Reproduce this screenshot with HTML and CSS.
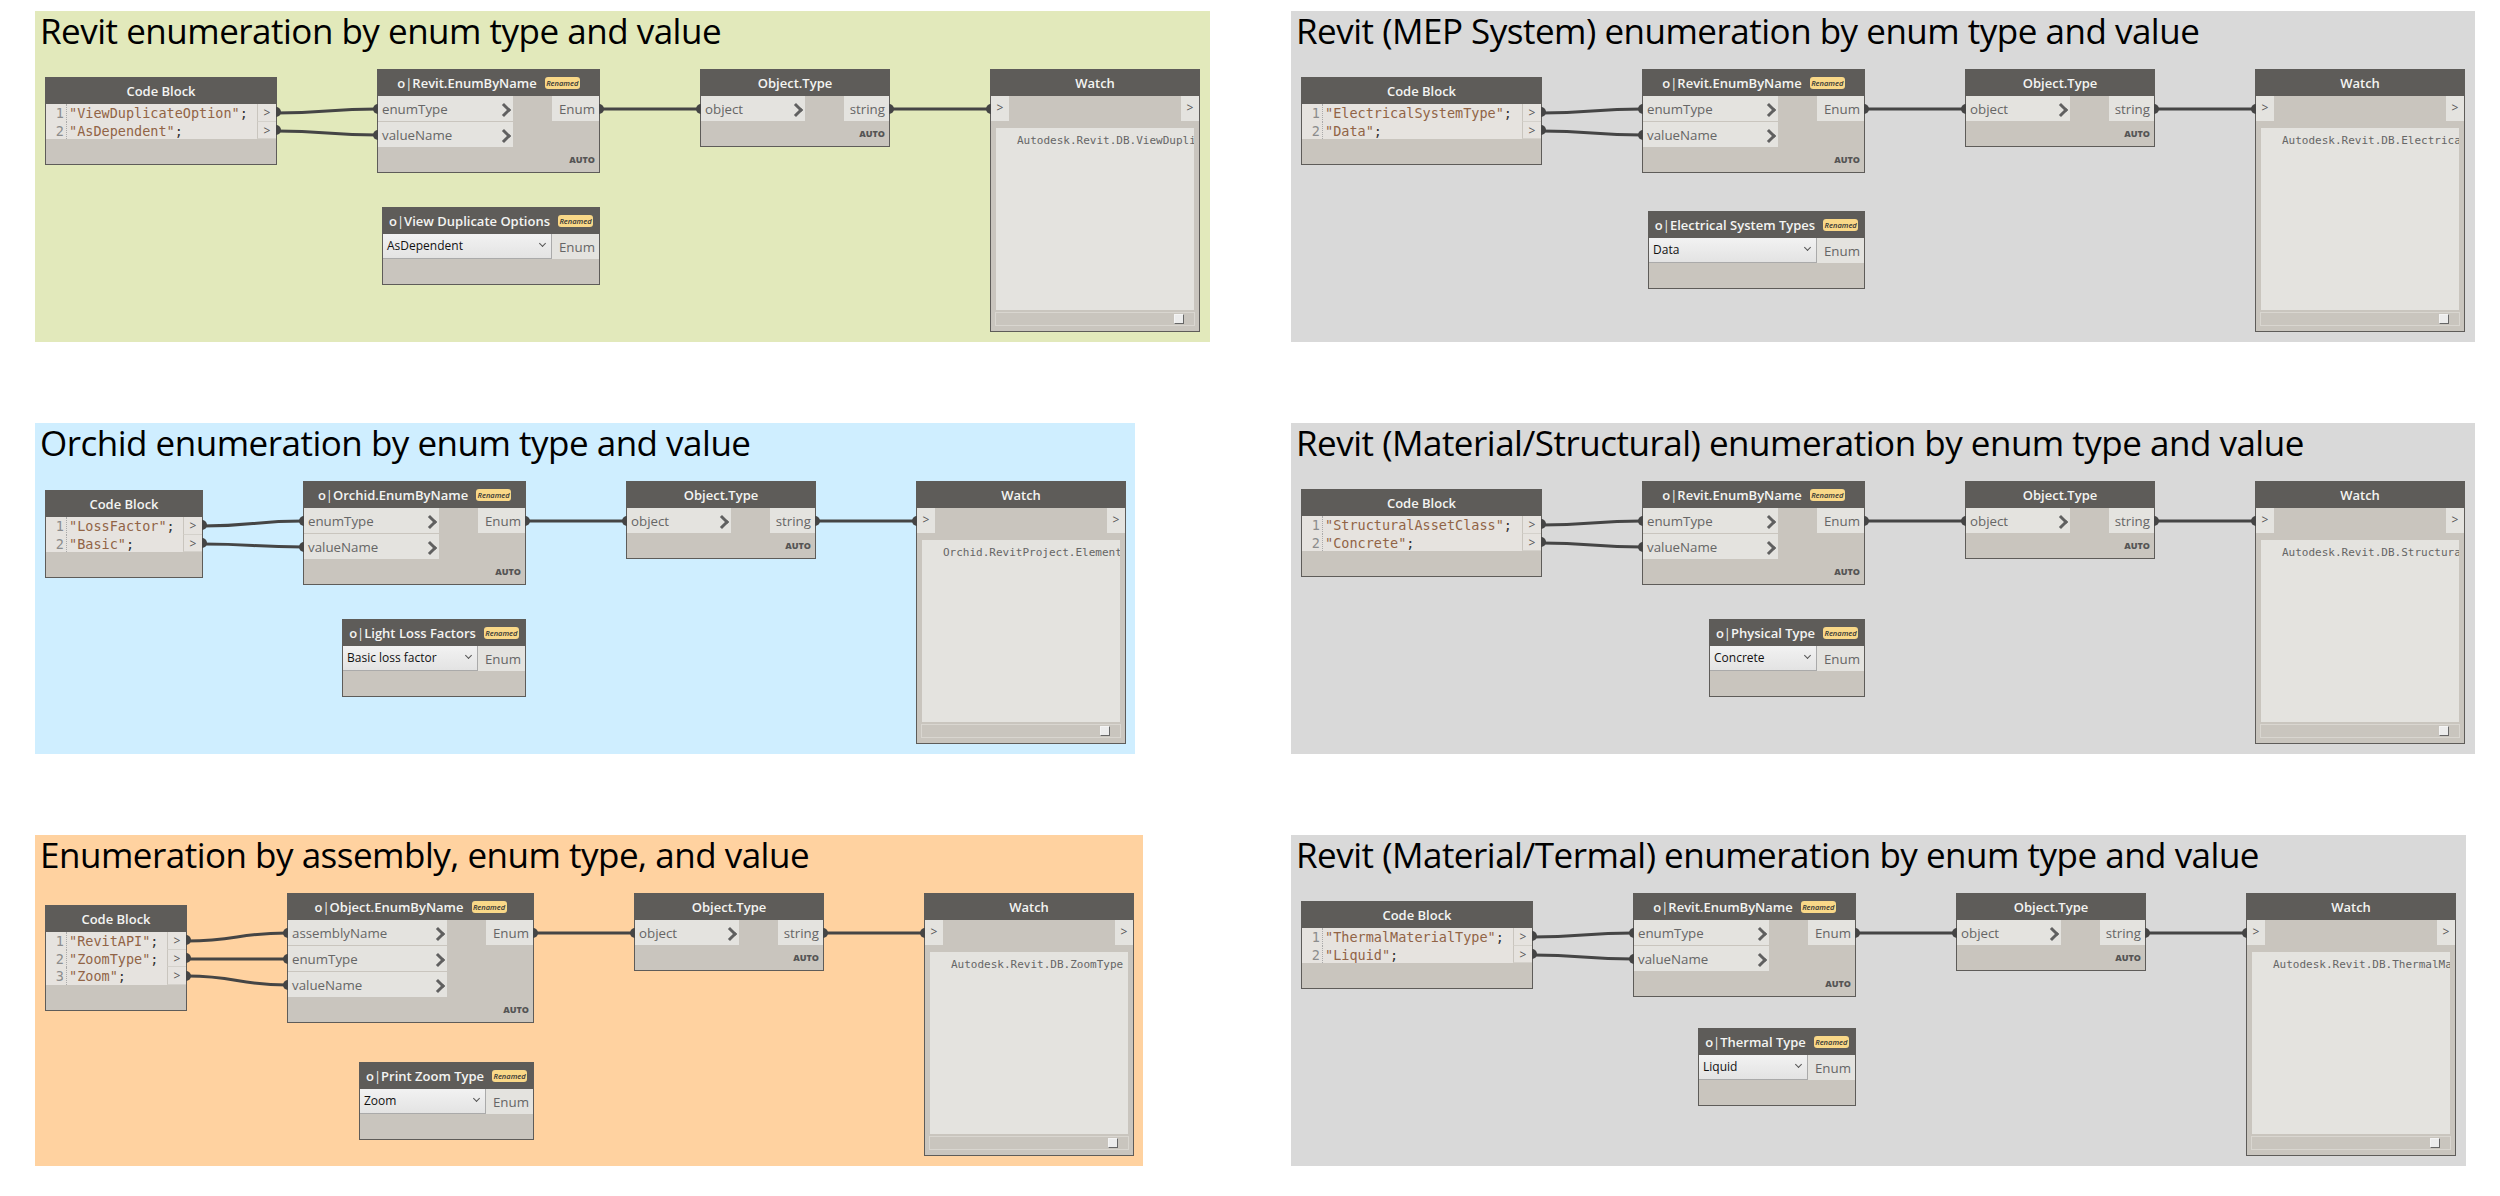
FILE: index.html
```html
<!DOCTYPE html>
<html lang="en">
<head>
  <meta charset="UTF-8">
  <title>Enumeration nodes</title>
  <link rel="stylesheet" href="styles.css">
</head>
<body>
  <div class="sheet">

    <!-- Revit -->
    <section class="panel panel-a">
      <h2>Revit enumeration by enum type and value</h2>
      <svg class="wires">
        <path d="M242 102 C292 102 292 98 342 98"/>
        <path d="M242 120 C292 120 292 124 342 124"/>
        <path d="M565 98 H665"/>
        <path d="M855 98 H955"/>
      </svg>
      <div class="node code">
        <div class="node-head">Code Block</div>
        <div class="code-line"><span class="ln-num">1</span><span class="ln-text"><b>"ViewDuplicateOption"</b>;</span><span class="ln-port out">&gt;</span></div>
        <div class="code-line"><span class="ln-num">2</span><span class="ln-text"><b>"AsDependent"</b>;</span><span class="ln-port out">&gt;</span></div>
        <div class="node-foot"></div>
      </div>
      <div class="node enum">
        <div class="node-head"><span>o<i class="pipe">|</i>Revit.EnumByName</span><span class="badge">Renamed</span></div>
        <div class="ports">
          <div class="inputs">
            <div class="in-row in">enumType</div>
            <div class="in-row in">valueName</div>
          </div>
          <div class="out-row out">Enum</div>
        </div>
        <div class="node-foot">AUTO</div>
      </div>
      <div class="node pick">
        <div class="node-head"><span>o<i class="pipe">|</i>View Duplicate Options</span><span class="badge">Renamed</span></div>
        <div class="ports">
          <div class="select">AsDependent</div>
          <div class="out-row">Enum</div>
        </div>
        <div class="node-foot"></div>
      </div>
      <div class="node type">
        <div class="node-head">Object.Type</div>
        <div class="ports">
          <div class="inputs"><div class="in-row in">object</div></div>
          <div class="out-row out">string</div>
        </div>
        <div class="node-foot">AUTO</div>
      </div>
      <div class="node watch">
        <div class="node-head">Watch</div>
        <div class="ports">
          <div class="watch-port in">&gt;</div>
          <div class="watch-port">&gt;</div>
        </div>
        <div class="watch-box">Autodesk.Revit.DB.ViewDuplicateOption</div>
        <div class="watch-bar"><span class="thumb"></span></div>
      </div>
    </section>

    <!-- Revit MEP -->
    <section class="panel panel-b">
      <h2>Revit (MEP System) enumeration by enum type and value</h2>
      <svg class="wires">
        <path d="M251 102 C301 102 301 98 351 98"/>
        <path d="M251 120 C301 120 301 124 351 124"/>
        <path d="M574 98 H674"/>
        <path d="M864 98 H964"/>
      </svg>
      <div class="node code">
        <div class="node-head">Code Block</div>
        <div class="code-line"><span class="ln-num">1</span><span class="ln-text"><b>"ElectricalSystemType"</b>;</span><span class="ln-port out">&gt;</span></div>
        <div class="code-line"><span class="ln-num">2</span><span class="ln-text"><b>"Data"</b>;</span><span class="ln-port out">&gt;</span></div>
        <div class="node-foot"></div>
      </div>
      <div class="node enum">
        <div class="node-head"><span>o<i class="pipe">|</i>Revit.EnumByName</span><span class="badge">Renamed</span></div>
        <div class="ports">
          <div class="inputs">
            <div class="in-row in">enumType</div>
            <div class="in-row in">valueName</div>
          </div>
          <div class="out-row out">Enum</div>
        </div>
        <div class="node-foot">AUTO</div>
      </div>
      <div class="node pick">
        <div class="node-head"><span>o<i class="pipe">|</i>Electrical System Types</span><span class="badge">Renamed</span></div>
        <div class="ports">
          <div class="select">Data</div>
          <div class="out-row">Enum</div>
        </div>
        <div class="node-foot"></div>
      </div>
      <div class="node type">
        <div class="node-head">Object.Type</div>
        <div class="ports">
          <div class="inputs"><div class="in-row in">object</div></div>
          <div class="out-row out">string</div>
        </div>
        <div class="node-foot">AUTO</div>
      </div>
      <div class="node watch">
        <div class="node-head">Watch</div>
        <div class="ports">
          <div class="watch-port in">&gt;</div>
          <div class="watch-port">&gt;</div>
        </div>
        <div class="watch-box">Autodesk.Revit.DB.ElectricalSystemType</div>
        <div class="watch-bar"><span class="thumb"></span></div>
      </div>
    </section>

    <!-- Orchid -->
    <section class="panel panel-c">
      <h2>Orchid enumeration by enum type and value</h2>
      <svg class="wires">
        <path d="M168 103 C218 103 218 98 268 98"/>
        <path d="M168 121 C218 121 218 124 268 124"/>
        <path d="M491 98 H591"/>
        <path d="M781 98 H881"/>
      </svg>
      <div class="node code">
        <div class="node-head">Code Block</div>
        <div class="code-line"><span class="ln-num">1</span><span class="ln-text"><b>"LossFactor"</b>;</span><span class="ln-port out">&gt;</span></div>
        <div class="code-line"><span class="ln-num">2</span><span class="ln-text"><b>"Basic"</b>;</span><span class="ln-port out">&gt;</span></div>
        <div class="node-foot"></div>
      </div>
      <div class="node enum">
        <div class="node-head"><span>o<i class="pipe">|</i>Orchid.EnumByName</span><span class="badge">Renamed</span></div>
        <div class="ports">
          <div class="inputs">
            <div class="in-row in">enumType</div>
            <div class="in-row in">valueName</div>
          </div>
          <div class="out-row out">Enum</div>
        </div>
        <div class="node-foot">AUTO</div>
      </div>
      <div class="node pick">
        <div class="node-head"><span>o<i class="pipe">|</i>Light Loss Factors</span><span class="badge">Renamed</span></div>
        <div class="ports">
          <div class="select">Basic loss factor</div>
          <div class="out-row">Enum</div>
        </div>
        <div class="node-foot"></div>
      </div>
      <div class="node type">
        <div class="node-head">Object.Type</div>
        <div class="ports">
          <div class="inputs"><div class="in-row in">object</div></div>
          <div class="out-row out">string</div>
        </div>
        <div class="node-foot">AUTO</div>
      </div>
      <div class="node watch">
        <div class="node-head">Watch</div>
        <div class="ports">
          <div class="watch-port in">&gt;</div>
          <div class="watch-port">&gt;</div>
        </div>
        <div class="watch-box">Orchid.RevitProject.Elements.LightLossFactor</div>
        <div class="watch-bar"><span class="thumb"></span></div>
      </div>
    </section>

    <!-- Revit structural -->
    <section class="panel panel-d">
      <h2>Revit (Material/Structural) enumeration by enum type and value</h2>
      <svg class="wires">
        <path d="M251 102 C301 102 301 98 351 98"/>
        <path d="M251 120 C301 120 301 124 351 124"/>
        <path d="M574 98 H674"/>
        <path d="M864 98 H964"/>
      </svg>
      <div class="node code">
        <div class="node-head">Code Block</div>
        <div class="code-line"><span class="ln-num">1</span><span class="ln-text"><b>"StructuralAssetClass"</b>;</span><span class="ln-port out">&gt;</span></div>
        <div class="code-line"><span class="ln-num">2</span><span class="ln-text"><b>"Concrete"</b>;</span><span class="ln-port out">&gt;</span></div>
        <div class="node-foot"></div>
      </div>
      <div class="node enum">
        <div class="node-head"><span>o<i class="pipe">|</i>Revit.EnumByName</span><span class="badge">Renamed</span></div>
        <div class="ports">
          <div class="inputs">
            <div class="in-row in">enumType</div>
            <div class="in-row in">valueName</div>
          </div>
          <div class="out-row out">Enum</div>
        </div>
        <div class="node-foot">AUTO</div>
      </div>
      <div class="node pick">
        <div class="node-head"><span>o<i class="pipe">|</i>Physical Type</span><span class="badge">Renamed</span></div>
        <div class="ports">
          <div class="select">Concrete</div>
          <div class="out-row">Enum</div>
        </div>
        <div class="node-foot"></div>
      </div>
      <div class="node type">
        <div class="node-head">Object.Type</div>
        <div class="ports">
          <div class="inputs"><div class="in-row in">object</div></div>
          <div class="out-row out">string</div>
        </div>
        <div class="node-foot">AUTO</div>
      </div>
      <div class="node watch">
        <div class="node-head">Watch</div>
        <div class="ports">
          <div class="watch-port in">&gt;</div>
          <div class="watch-port">&gt;</div>
        </div>
        <div class="watch-box">Autodesk.Revit.DB.StructuralAssetClass</div>
        <div class="watch-bar"><span class="thumb"></span></div>
      </div>
    </section>

    <!-- assembly -->
    <section class="panel panel-e">
      <h2>Enumeration by assembly, enum type, and value</h2>
      <svg class="wires">
        <path d="M152 106 C202 106 202 98 252 98"/>
        <path d="M152 124 H252"/>
        <path d="M152 141 C202 141 202 150 252 150"/>
        <path d="M499 98 H599"/>
        <path d="M789 98 H889"/>
      </svg>
      <div class="node code">
        <div class="node-head">Code Block</div>
        <div class="code-line"><span class="ln-num">1</span><span class="ln-text"><b>"RevitAPI"</b>;</span><span class="ln-port out">&gt;</span></div>
        <div class="code-line"><span class="ln-num">2</span><span class="ln-text"><b>"ZoomType"</b>;</span><span class="ln-port out">&gt;</span></div>
        <div class="code-line"><span class="ln-num">3</span><span class="ln-text"><b>"Zoom"</b>;</span><span class="ln-port out">&gt;</span></div>
        <div class="node-foot"></div>
      </div>
      <div class="node enum">
        <div class="node-head"><span>o<i class="pipe">|</i>Object.EnumByName</span><span class="badge">Renamed</span></div>
        <div class="ports">
          <div class="inputs">
            <div class="in-row in">assemblyName</div>
            <div class="in-row in">enumType</div>
            <div class="in-row in">valueName</div>
          </div>
          <div class="out-row out">Enum</div>
        </div>
        <div class="node-foot">AUTO</div>
      </div>
      <div class="node pick">
        <div class="node-head"><span>o<i class="pipe">|</i>Print Zoom Type</span><span class="badge">Renamed</span></div>
        <div class="ports">
          <div class="select">Zoom</div>
          <div class="out-row">Enum</div>
        </div>
        <div class="node-foot"></div>
      </div>
      <div class="node type">
        <div class="node-head">Object.Type</div>
        <div class="ports">
          <div class="inputs"><div class="in-row in">object</div></div>
          <div class="out-row out">string</div>
        </div>
        <div class="node-foot">AUTO</div>
      </div>
      <div class="node watch">
        <div class="node-head">Watch</div>
        <div class="ports">
          <div class="watch-port in">&gt;</div>
          <div class="watch-port">&gt;</div>
        </div>
        <div class="watch-box">Autodesk.Revit.DB.ZoomType</div>
        <div class="watch-bar"><span class="thumb"></span></div>
      </div>
    </section>

    <!-- Revit thermal -->
    <section class="panel panel-f">
      <h2>Revit (Material/Termal) enumeration by enum type and value</h2>
      <svg class="wires">
        <path d="M242 102 C292 102 292 98 342 98"/>
        <path d="M242 120 C292 120 292 124 342 124"/>
        <path d="M565 98 H665"/>
        <path d="M855 98 H955"/>
      </svg>
      <div class="node code">
        <div class="node-head">Code Block</div>
        <div class="code-line"><span class="ln-num">1</span><span class="ln-text"><b>"ThermalMaterialType"</b>;</span><span class="ln-port out">&gt;</span></div>
        <div class="code-line"><span class="ln-num">2</span><span class="ln-text"><b>"Liquid"</b>;</span><span class="ln-port out">&gt;</span></div>
        <div class="node-foot"></div>
      </div>
      <div class="node enum">
        <div class="node-head"><span>o<i class="pipe">|</i>Revit.EnumByName</span><span class="badge">Renamed</span></div>
        <div class="ports">
          <div class="inputs">
            <div class="in-row in">enumType</div>
            <div class="in-row in">valueName</div>
          </div>
          <div class="out-row out">Enum</div>
        </div>
        <div class="node-foot">AUTO</div>
      </div>
      <div class="node pick">
        <div class="node-head"><span>o<i class="pipe">|</i>Thermal Type</span><span class="badge">Renamed</span></div>
        <div class="ports">
          <div class="select">Liquid</div>
          <div class="out-row">Enum</div>
        </div>
        <div class="node-foot"></div>
      </div>
      <div class="node type">
        <div class="node-head">Object.Type</div>
        <div class="ports">
          <div class="inputs"><div class="in-row in">object</div></div>
          <div class="out-row out">string</div>
        </div>
        <div class="node-foot">AUTO</div>
      </div>
      <div class="node watch">
        <div class="node-head">Watch</div>
        <div class="ports">
          <div class="watch-port in">&gt;</div>
          <div class="watch-port">&gt;</div>
        </div>
        <div class="watch-box">Autodesk.Revit.DB.ThermalMaterialType</div>
        <div class="watch-bar"><span class="thumb"></span></div>
      </div>
    </section>

  </div>
</body>
</html>
```

FILE: styles.css
```css
* {
  box-sizing: border-box;
}
body {
  margin: 0;
  background: #fff;
  font-family: 'Open Sans', sans-serif;
}
.sheet {
  display: grid;
  grid-template-columns: 1256px 1184px;
  grid-auto-rows: 331px;
  row-gap: 81px;
  padding: 11px 0 0 35px;
}

/* panels */
.panel {
  position: relative;
  justify-self: start;
  height: 100%;
}
.panel h2 {
  margin: 0;
  padding: 0 0 0 5px;
  font-size: 35px;
  font-weight: 400;
  line-height: 39px;
  letter-spacing: -0.5px;
  color: #000;
  white-space: nowrap;
}
.panel-a { width: 1175px; background: #e2e9bb; }
.panel-b { width: 1184px; background: #d9d9d9; }
.panel-c { width: 1100px; background: #cfeeff; }
.panel-d { width: 1184px; background: #d9d9d9; }
.panel-e { width: 1108px; background: #ffd2a0; }
.panel-f { width: 1175px; background: #d9d9d9; }

.wires {
  position: absolute;
  top: 0;
  left: 0;
  width: 100%;
  height: 100%;
}
.wires path {
  fill: none;
  stroke: #454545;
  stroke-width: 3;
}

/* node positions on each canvas */
.node { position: absolute; }
.node.enum, .node.type { top: 58px; }
.node.watch { top: 58px; width: 210px; }
.node.type { width: 190px; }
.node.enum { width: 223px; }

.panel-a .code { left: 10px; top: 66px; width: 232px; }
.panel-a .enum { left: 342px; }
.panel-a .pick { left: 347px; top: 196px; width: 218px; }
.panel-a .type { left: 665px; }
.panel-a .watch { left: 955px; }

.panel-b .code { left: 10px; top: 66px; width: 241px; }
.panel-b .enum { left: 351px; }
.panel-b .pick { left: 357px; top: 200px; width: 217px; }
.panel-b .type { left: 674px; }
.panel-b .watch { left: 964px; }

.panel-c .code { left: 10px; top: 67px; width: 158px; }
.panel-c .enum { left: 268px; }
.panel-c .pick { left: 307px; top: 196px; width: 184px; }
.panel-c .type { left: 591px; }
.panel-c .watch { left: 881px; }

.panel-d .code { left: 10px; top: 66px; width: 241px; }
.panel-d .enum { left: 351px; }
.panel-d .pick { left: 418px; top: 196px; width: 156px; }
.panel-d .type { left: 674px; }
.panel-d .watch { left: 964px; }

.panel-e .code { left: 10px; top: 70px; width: 142px; }
.panel-e .enum { left: 252px; width: 247px; }
.panel-e .enum .inputs { width: 159px; }
.panel-e .pick { left: 324px; top: 227px; width: 175px; }
.panel-e .type { left: 599px; }
.panel-e .watch { left: 889px; }

.panel-f .code { left: 10px; top: 66px; width: 232px; }
.panel-f .enum { left: 342px; }
.panel-f .pick { left: 407px; top: 193px; width: 158px; }
.panel-f .type { left: 665px; }
.panel-f .watch { left: 955px; }

/* node shell */
.node {
  border: 1px solid #5e5c59;
  background: #c9c5be;
  color: #666;
  font-size: 13.3px;
}
.node-head {
  display: flex;
  align-items: center;
  justify-content: center;
  gap: 8px;
  height: 26px;
  background: #5e5c59;
  color: #f4f4f2;
  font-size: 13px;
  font-weight: 600;
  white-space: nowrap;
}
.pipe {
  font-style: normal;
  font-weight: 400;
}
.badge {
  width: 35px;
  height: 12px;
  border-radius: 3px;
  background: #f9d888;
  color: #333;
  font-size: 7.5px;
  font-style: italic;
  font-weight: 600;
  line-height: 12px;
  text-align: center;
}
.node-foot {
  height: 25px;
  padding: 7px 4px 0 0;
  text-align: right;
  color: #555;
  font-size: 9px;
  font-weight: 800;
  line-height: 12px;
}

/* input / output rows */
.ports {
  display: flex;
  justify-content: space-between;
}
.inputs {
  width: 135px;
}
.node.type .inputs {
  width: 104px;
}
.in-row {
  position: relative;
  height: 25px;
  padding-left: 4px;
  background: #e4e3df;
  line-height: 26px;
}
.in-row + .in-row {
  margin-top: 1px;
}
.in-row::after {
  content: '';
  position: absolute;
  right: 4px;
  top: 9px;
  width: 7px;
  height: 7px;
  border-top: 3px solid #606060;
  border-right: 3px solid #606060;
  transform: rotate(45deg);
}
.out-row {
  position: relative;
  align-self: flex-start;
  height: 25px;
  width: 47px;
  padding-right: 4px;
  background: #e4e3df;
  text-align: right;
  line-height: 26px;
}
.node.type .out-row {
  width: 45px;
}

/* little stubs where the wires plug in */
.in::before,
.out::before {
  content: '';
  position: absolute;
  top: 50%;
  width: 5px;
  height: 10px;
  margin-top: -5px;
  background: #454545;
}
.in::before {
  left: -5px;
  border-radius: 5px 0 0 5px;
}
.out::before {
  right: -5px;
  border-radius: 0 5px 5px 0;
}

/* code block */
.code-line {
  display: flex;
  height: 17.67px;
  background: #e6e3df;
  font-family: 'DejaVu Sans Mono', monospace;
  font-size: 13.5px;
  line-height: 18px;
  color: #333;
  white-space: nowrap;
}
.ln-num {
  width: 21px;
  padding-right: 2px;
  border-right: 1px dotted #aaa;
  text-align: right;
  color: #8c8c8c;
}
.ln-text {
  flex: 1;
  padding-left: 2px;
  overflow: hidden;
}
.ln-text b {
  font-weight: 400;
  color: #916446;
}
.ln-port {
  position: relative;
  width: 19px;
  border-left: 1px solid #c9c5be;
  border-bottom: 1px solid #d4d1cb;
  text-align: center;
  font-family: 'Open Sans', sans-serif;
  font-size: 12px;
  color: #555;
}
.code-line:last-of-type .ln-port {
  border-bottom: 0;
}

/* dropdown */
.select {
  position: relative;
  flex: 1;
  height: 25px;
  padding-left: 4px;
  border-right: 1px solid #aaa;
  border-bottom: 1px solid #aaa;
  background: linear-gradient(#f2f2f2, #e3e3e3);
  color: #111;
  font-size: 12px;
  line-height: 23px;
}
.select::after {
  content: '';
  position: absolute;
  right: 6px;
  top: 7px;
  width: 4px;
  height: 4px;
  border-right: 1px solid #555;
  border-bottom: 1px solid #555;
  transform: rotate(45deg);
}

/* watch */
.watch-port {
  position: relative;
  width: 18px;
  height: 25px;
  background: #e4e3df;
  text-align: center;
  font-size: 12px;
  line-height: 24px;
  color: #555;
}
.watch-box {
  height: 182px;
  margin: 7px 5px 0;
  padding: 6px 0 0 21px;
  overflow: hidden;
  background: #e4e3df;
  color: #666;
  font-family: 'DejaVu Sans Mono', monospace;
  font-size: 11px;
  line-height: 14px;
  white-space: nowrap;
}
.watch-bar {
  display: flex;
  align-items: center;
  justify-content: flex-end;
  height: 14px;
  margin: 2px 4px 5px;
  padding-right: 10px;
  border: 1px solid #d9d6d0;
}
.thumb {
  width: 10px;
  height: 10px;
  border: 1px solid #f4f4f4;
  border-right-color: #666;
  border-bottom-color: #666;
  background: #ececec;
}
```
